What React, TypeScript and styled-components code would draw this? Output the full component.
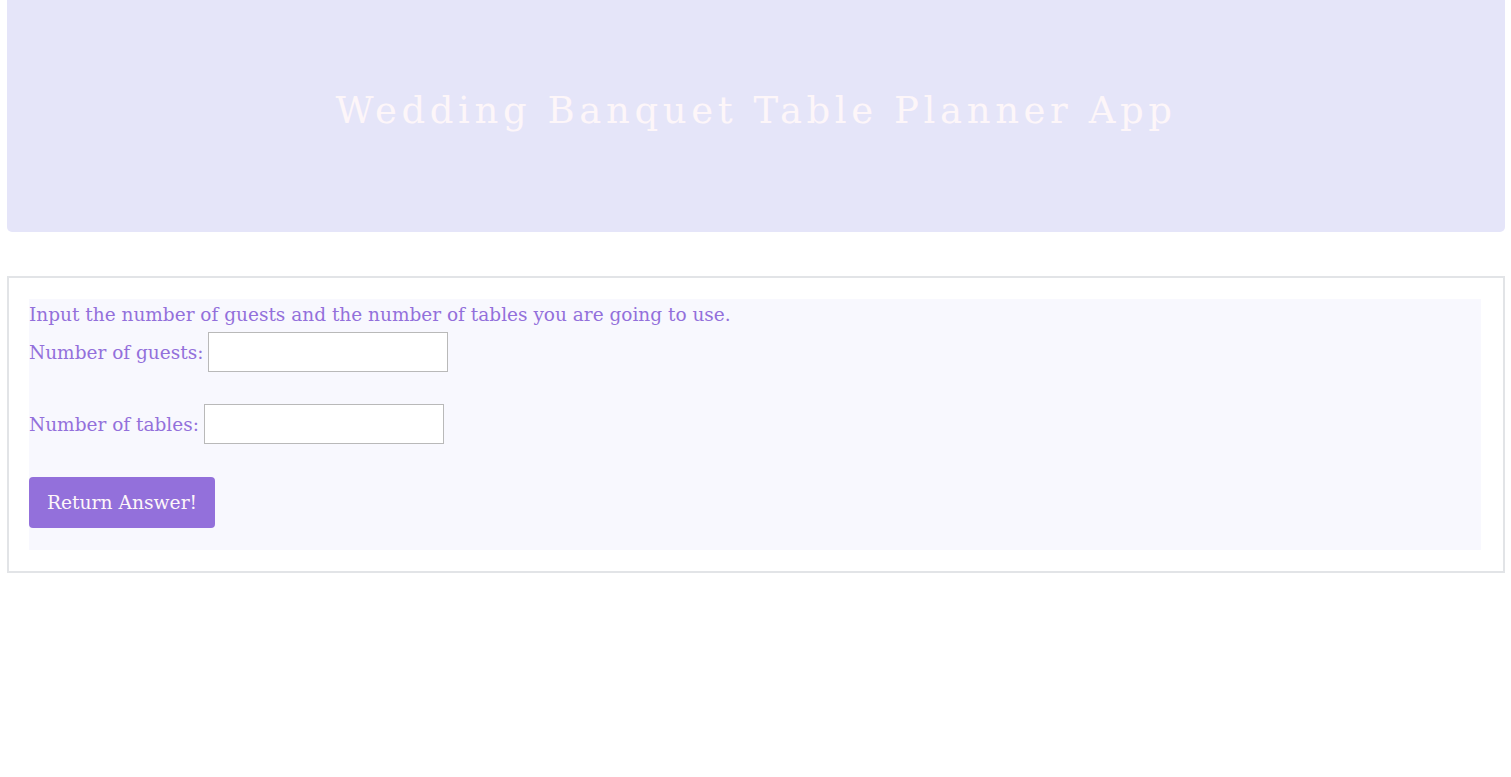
import React from "react";
import styled, { createGlobalStyle } from "styled-components";

const Global = createGlobalStyle`
  html, body { margin: 0; padding: 0; background: #ffffff; }
  body { font-family: "DejaVu Serif", Georgia, serif; }
`;

const Page = styled.div`
  padding: 0 6px 0 7px;
  display: flex;
  flex-direction: column;
  gap: 44px;
`;

const Header = styled.header`
  height: 232px;
  background: #e5e5f9;
  border-radius: 0 0 5px 5px;
  display: flex;
  align-items: center;
  justify-content: center;
`;

const Title = styled.h1`
  margin: 0;
  margin-top: -12px;
  font-family: "DejaVu Serif", Georgia, serif;
  font-weight: normal;
  font-size: 37px;
  letter-spacing: 4.6px;
  color: #fdf6f9;
`;

const Card = styled.section`
  border: 2px solid #e2e4e7;
  padding: 21px 22px 21px 20px;
`;

const Form = styled.form`
  background: #f8f8fe;
  display: flex;
  flex-direction: column;
  align-items: flex-start;
  padding-bottom: 22px;
  color: #9370db;
  font-family: "DejaVu Serif", Georgia, serif;
  font-size: 18.5px;
`;

const Intro = styled.div`
  line-height: 32px;
  height: 32px;
  margin-bottom: 1px;
`;

const Row = styled.label<{ $gapAfter: number }>`
  display: flex;
  align-items: center;
  gap: 5px;
  height: 40px;
  margin-bottom: ${(p) => p.$gapAfter}px;
`;

const Input = styled.input`
  width: 240px;
  height: 40px;
  box-sizing: border-box;
  border: 1px solid #b9b9b9;
  background: #ffffff;
  margin: 0;
  padding: 2px 4px;
  font: inherit;
`;

const Button = styled.button`
  width: 186px;
  height: 51px;
  border: none;
  border-radius: 4px;
  background: #9370db;
  color: #fdf6f9;
  font-family: "DejaVu Serif", Georgia, serif;
  font-size: 18.7px;
  cursor: pointer;
`;

export default function App() {
  return (
    <>
      <Global />
      <Page>
        <Header>
          <Title>Wedding Banquet Table Planner App</Title>
        </Header>
        <Card>
          <Form onSubmit={(e) => e.preventDefault()}>
            <Intro>Input the number of guests and the number of tables you are going to use.</Intro>
            <Row $gapAfter={32}>
              Number of guests: <Input type="text" />
            </Row>
            <Row $gapAfter={33}>
              Number of tables: <Input type="text" />
            </Row>
            <Button type="submit">Return Answer!</Button>
          </Form>
        </Card>
      </Page>
    </>
  );
}
